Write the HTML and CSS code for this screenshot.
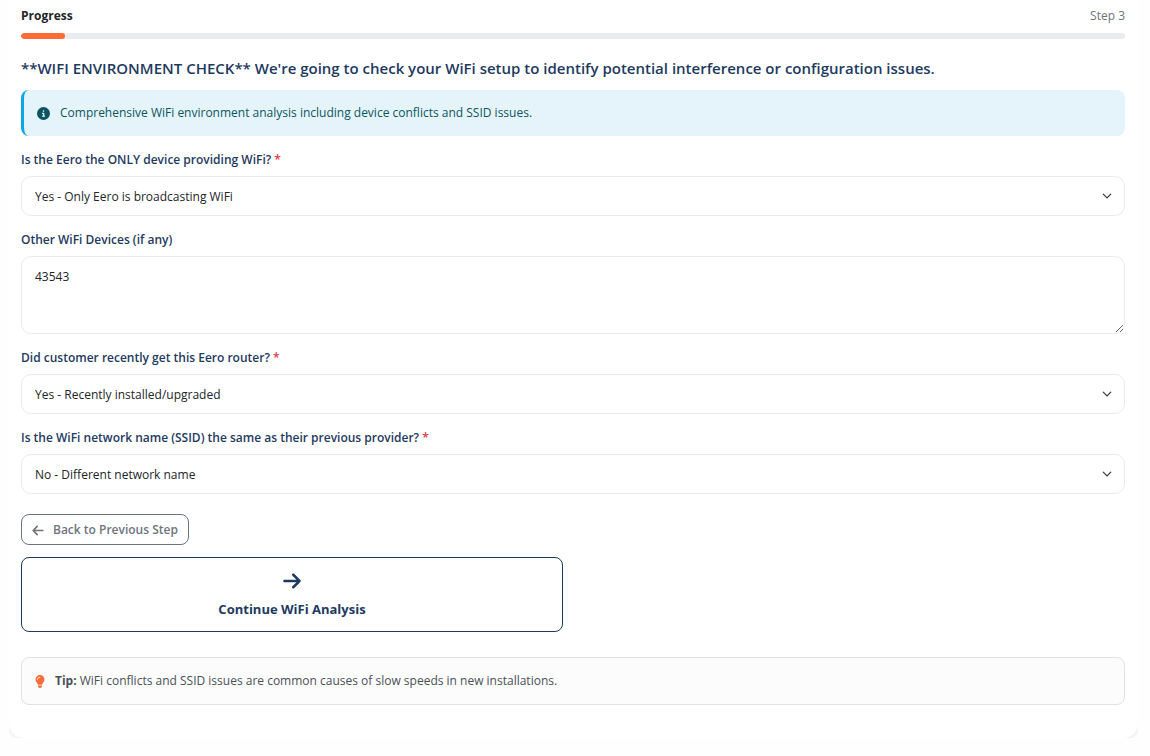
FILE: index.html
```html
<!DOCTYPE html>
<html lang="en">
<head>
<meta charset="utf-8">
<meta name="viewport" content="width=device-width, initial-scale=1">
<title>WiFi Environment Check</title>
<link rel="stylesheet" href="styles.css">
</head>
<body>
<main class="card">
  <div class="progress-head">
    <span class="progress-title" id="progress-title">Progress</span>
    <span class="progress-step">Step 3</span>
  </div>
  <div class="progress" role="progressbar" aria-labelledby="progress-title" aria-valuenow="4" aria-valuemin="0" aria-valuemax="100">
    <div class="progress-fill" style="width: 4%"></div>
  </div>

  <h1 class="question">**WIFI ENVIRONMENT CHECK** We're going to check your WiFi setup to identify potential interference or configuration issues.</h1>

  <div class="alert">
    <svg class="alert-icon" viewBox="0 0 512 512" aria-hidden="true"><path fill="currentColor" d="M256 512A256 256 0 1 0 256 0a256 256 0 1 0 0 512zM216 336h24V272H216c-13.300 0-24-10.700-24-24s10.700-24 24-24h48c13.300 0 24 10.700 24 24v88h8c13.300 0 24 10.700 24 24s-10.700 24-24 24H216c-13.300 0-24-10.700-24-24s10.700-24 24-24zm40-208a32 32 0 1 1 0 64 32 32 0 1 1 0-64z"/></svg>
    <span>Comprehensive WiFi environment analysis including device conflicts and SSID issues.</span>
  </div>

  <form class="form">
    <div class="field">
      <label class="label" for="only">Is the Eero the ONLY device providing WiFi? <span class="required">*</span></label>
      <select class="control select" id="only" required>
        <option>Yes - Only Eero is broadcasting WiFi</option>
      </select>
    </div>
    <div class="field">
      <label class="label" for="others">Other WiFi Devices (if any)</label>
      <textarea class="control textarea" id="others">43543</textarea>
    </div>
    <div class="field">
      <label class="label" for="recent">Did customer recently get this Eero router? <span class="required">*</span></label>
      <select class="control select" id="recent" required>
        <option>Yes - Recently installed/upgraded</option>
      </select>
    </div>
    <div class="field">
      <label class="label" for="ssid">Is the WiFi network name (SSID) the same as their previous provider? <span class="required">*</span></label>
      <select class="control select" id="ssid" required>
        <option>No - Different network name</option>
      </select>
    </div>
  </form>

  <button class="back" type="button">
    <svg class="back-icon" viewBox="0 0 448 512" aria-hidden="true"><path fill="currentColor" d="M9.400 233.400c-12.500 12.500-12.500 32.800 0 45.300l160 160c12.500 12.500 32.800 12.500 45.300 0s12.500-32.800 0-45.300L109.200 288 416 288c17.700 0 32-14.300 32-32s-14.300-32-32-32l-306.700 0L214.600 118.600c12.500-12.500 12.500-32.800 0-45.300s-32.800-12.500-45.300 0l-160 160z"/></svg>
    <span>Back to Previous Step</span>
  </button>

  <div class="actions">
    <button class="continue" type="button">
      <svg class="continue-icon" viewBox="0 0 448 512" aria-hidden="true"><path fill="currentColor" d="M438.600 278.600c12.500-12.500 12.500-32.800 0-45.300l-160-160c-12.500-12.500-32.800-12.500-45.300 0s-12.500 32.800 0 45.300L338.800 224 32 224c-17.700 0-32 14.300-32 32s14.300 32 32 32l306.700 0L233.400 393.400c-12.500 12.500-12.500 32.800 0 45.300s32.800 12.500 45.300 0l160-160z"/></svg>
      <span>Continue WiFi Analysis</span>
    </button>
  </div>

  <div class="tip">
    <svg class="tip-icon" viewBox="0 0 384 512" aria-hidden="true"><path fill="currentColor" d="M272 384c9.600-31.900 29.500-59.100 49.200-86.200c5.200-7.100 10.400-14.200 15.400-21.400c19.800-28.500 31.400-63 31.400-100.300C368 78.800 289.200 0 192 0S16 78.800 16 176c0 37.300 11.600 71.900 31.400 100.300c5 7.200 10.200 14.300 15.400 21.400c19.800 27.100 39.700 54.400 49.200 86.200H272zM192 512c44.200 0 80-35.800 80-80V416H112v16c0 44.200 35.800 80 80 80zM112 176c0 8.800-7.200 16-16 16s-16-7.200-16-16c0-61.900 50.100-112 112-112c8.800 0 16 7.200 16 16s-7.200 16-16 16c-44.200 0-80 35.800-80 80z"/></svg>
    <span><strong>Tip:</strong> WiFi conflicts and SSID issues are common causes of slow speeds in new installations.</span>
  </div>
</main>
</body>
</html>
```
FILE: styles.css
```css
* {
  box-sizing: border-box;
}

body {
  margin: 0 12px 0 9px;
  background: #fefefe;
  color: #212529;
  font: 12px/20px "Open Sans", "Noto Sans", sans-serif;
}

.card {
  padding: 6px 13px 33px 12px;
  border-radius: 0 0 14px 14px;
  background: #fff;
  box-shadow: 0 1px 4px rgba(0, 0, 0, 0.1);
}

.progress-head {
  display: flex;
  justify-content: space-between;
  margin-bottom: 7px;
}

.progress-title {
  font-weight: 700;
}

.progress-step {
  color: #6c757d;
}

.progress {
  height: 6px;
  border-radius: 3px;
  background: #e9ecef;
  overflow: hidden;
}

.progress-fill {
  height: 100%;
  border-radius: 3px;
  background: #ff6b35;
}

.question {
  margin: 19px 0 12px;
  color: #1e3a5f;
  font-size: 15px;
  font-weight: 600;
}

.alert {
  display: flex;
  align-items: center;
  gap: 10px;
  padding: 13px;
  border-left: 3px solid #0ea5e9;
  border-radius: 8px;
  background: #e5f4fb;
  color: #0c5460;
}

.alert-icon {
  width: 13px;
  height: 13px;
}

.form {
  display: grid;
  gap: 14px;
  margin: 14px 0 20px;
}

.field {
  display: grid;
  gap: 6px;
}

.label {
  color: #1e3a5f;
  font-weight: 600;
}

.required {
  color: #dc3545;
}

.control {
  width: 100%;
  padding: 10px 13px 8px;
  border: 1px solid #e9ecef;
  border-radius: 10px;
  background-color: #fff;
  color: #212529;
  font: inherit;
}

.select {
  height: 40px;
  appearance: none;
  background-image: url("data:image/svg+xml,%3Csvg xmlns='http://www.w3.org/2000/svg' viewBox='0 0 16 16'%3E%3Cpath fill='none' stroke='%23343a40' stroke-linecap='round' stroke-linejoin='round' stroke-width='2' d='m2 5 6 6 6-6'/%3E%3C/svg%3E");
  background-repeat: no-repeat;
  background-position: right 12px center;
  background-size: 10px 10px;
}

.textarea {
  display: block;
  height: 78px;
  resize: vertical;
}

.back,
.continue {
  border: 1px solid;
  border-radius: 8px;
  background: #fff;
  font: inherit;
}

.back {
  display: flex;
  align-items: center;
  gap: 9px;
  padding: 5px 10px 4px;
  border-color: #6c757d;
  color: #6c757d;
  font-weight: 600;
}

.back-icon {
  width: 12px;
  height: 13px;
}

.actions {
  display: grid;
  grid-template-columns: 1fr 1fr;
  gap: 20px;
  margin: 12px 0 25px;
}

.continue {
  display: flex;
  flex-direction: column;
  align-items: center;
  gap: 8px;
  padding: 13px 12px 12px;
  border-color: #1e3a5f;
  color: #1e3a5f;
  font-size: 13px;
  font-weight: 700;
}

.continue-icon {
  width: 18px;
  height: 20px;
}

.tip {
  display: flex;
  align-items: center;
  gap: 10px;
  padding: 13px;
  border: 1px solid #dee2e6;
  border-radius: 8px;
  background: #fcfcfc;
  color: #495057;
}

.tip-icon {
  width: 10px;
  height: 13px;
  color: #ff6b35;
}
```
